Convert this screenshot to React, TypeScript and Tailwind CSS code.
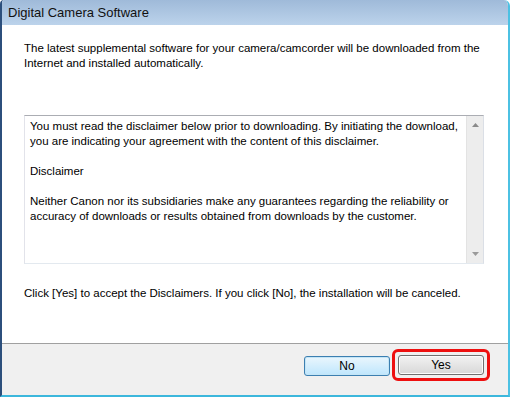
export default function App() {
  const font = { fontFamily: '"Liberation Sans", Arial, sans-serif' }
  return (
    <div
      className="w-[510px] h-[397px] bg-white overflow-hidden flex flex-col border-l-2 border-l-[#2c4f7c] border-r-2 border-r-[#4cc1e3] border-b-2 border-b-[#3cb7dc] rounded-tr-[6px] rounded-tl-[4px] text-[11.5px] text-black"
      style={font}
    >
      <div className="h-[25px] shrink-0 bg-gradient-to-b from-[#9fbad9] to-[#bcd3eb] flex items-center pl-[6px] text-[13px] text-[#111]">
        Digital Camera Software
      </div>
      <div className="flex-1 flex flex-col pl-[22px] pr-[24px] bg-white">
        <p className="mt-[16px] leading-[15px]">
          The latest supplemental software for your camera/camcorder will be downloaded from the Internet and installed automatically.
        </p>
        <div className="mt-[44px] h-[149px] flex border border-[#abadb3] border-l-[#e2e3ea] border-r-[#dbdfe6] border-b-[#e3e9ef]">
          <div className="flex-1 pl-[5px] pt-[3px] leading-[15px]">
            <p>
              You must read the disclaimer below prior to downloading. By initiating the download, you are indicating your agreement with the content of this disclaimer.
            </p>
            <p className="mt-[15px]">Disclaimer</p>
            <p className="mt-[15px]">
              Neither Canon nor its subsidiaries make any guarantees regarding the reliability or accuracy of downloads or results obtained from downloads by the customer.
            </p>
          </div>
          <div className="w-[17px] bg-[#ededed] border-l border-[#e3e3e3] flex flex-col items-center justify-between py-[7px]">
            <svg width="7" height="4" viewBox="0 0 7 4">
              <path d="M3.5 0 L7 4 L0 4 Z" fill="#8a8a8a" />
            </svg>
            <svg width="7" height="4" viewBox="0 0 7 4">
              <path d="M0 0 L7 0 L3.5 4 Z" fill="#9a9a9a" />
            </svg>
          </div>
        </div>
        <p className="mt-[22px] leading-[15px]">
          Click [Yes] to accept the Disclaimers. If you click [No], the installation will be canceled.
        </p>
      </div>
      <div className="h-[52px] shrink-0 bg-[#f0f0f0] border-t border-[#a0a0a0] flex items-start justify-end pr-[18px] pt-[5px] gap-[2px]">
        <button className="mt-[7px] w-[86px] h-[20px] rounded-[3px] border border-[#3c7fb1] bg-gradient-to-b from-[#eaf6fd] to-[#bee6fd] text-[12px] shadow-[inset_0_0_0_1px_#c4e5f6]">
          No
        </button>
        <div className="p-[3px] border-[3px] border-[#ee1010] rounded-[6px]">
          <button className="w-[86px] h-[20px] rounded-[3px] border border-[#707070] bg-gradient-to-b from-[#f2f2f2] to-[#d8d8d8] text-[12px] shadow-[inset_0_0_0_1px_#fcfcfc]">
            Yes
          </button>
        </div>
      </div>
    </div>
  )
}
